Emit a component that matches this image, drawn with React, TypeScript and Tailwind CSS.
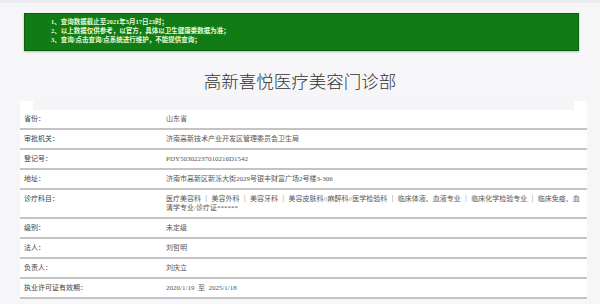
import React from "react";

const notices = [
  "1、查询数据截止至2021年5月17日23时；",
  "2、以上数据仅供参考，以官方，具体以卫生健康委数据为准；",
  "3、查询/点击查询/点系统进行维护，不能提供查询；",
];

const rows: { label: string; value: string; tall?: boolean }[] = [
  { label: "省份：", value: "山东省" },
  { label: "审批机关：", value: "济南高新技术产业开发区管理委员会卫生局" },
  { label: "登记号：", value: "PDY50302237010216D1542" },
  { label: "地址：", value: "济南市高新区新泺大街2029号银丰财富广场2号楼3-306" },
  {
    label: "诊疗科目：",
    value:
      "医疗美容科 ｜ 美容外科 ｜ 美容牙科 ｜ 美容皮肤科//麻醉科//医学检验科 ｜ 临床体液、血液专业 ｜ 临床化学检验专业 ｜ 临床免疫、血清学专业/诊疗证******",
    tall: true,
  },
  { label: "级别：", value: "未定级" },
  { label: "法人：", value: "刘哲明" },
  { label: "负责人：", value: "刘庆立" },
  { label: "执业许可证有效期：", value: "2020/1/19  至  2025/1/18" },
];

export default function App() {
  return (
    <div
      className="w-[600px] h-[304px] overflow-hidden bg-[#f6f6f8] border-t-[3px] border-[#ecebef]"
      style={{ fontFamily: '"Liberation Serif", "Noto Sans CJK SC", serif' }}
    >
      {/* notice box */}
      <div className="ml-[24px] mr-[21px] mt-[10px] h-[38px] bg-[#117c16] border border-[#0b5e0e] shadow-[0_1px_2px_rgba(0,0,0,0.25)] pl-[26px] pt-[3px] flex flex-col">
        {notices.map((n) => (
          <div
            key={n}
            className="text-[6.5px] leading-[9px] font-bold text-[#e9fbd6]"
          >
            {n}
          </div>
        ))}
      </div>

      {/* title */}
      <div className="h-[50px] flex items-center justify-center pt-[11px]">
        <h1
          className="text-[17.5px] font-light text-[#333]"
          style={{ fontFamily: '"Noto Sans CJK SC", serif' }}
        >
          高新喜悦医疗美容门诊部
        </h1>
      </div>

      {/* table card */}
      <div className="ml-[20px] w-[567px] bg-white">
        <div className="h-[9px] mx-[13px] bg-[#f5f5f7]" />
        {rows.map((r) => (
          <div
            key={r.label}
            className={`flex border-b-2 border-[#c4c4c4] ${
              r.tall ? "h-[29px] items-start pt-[5px]" : "h-[20px] items-center pt-[1px]"
            }`}
          >
            <div className="w-[146px] pl-[4px] text-[7px] leading-[9px] text-[#3e3e3e]">
              {r.label}
            </div>
            <div className="flex-1 pr-[2px] text-[7px] leading-[9px] text-[#555] whitespace-pre-wrap break-all">
              {r.value}
            </div>
          </div>
        ))}
      </div>
    </div>
  );
}
